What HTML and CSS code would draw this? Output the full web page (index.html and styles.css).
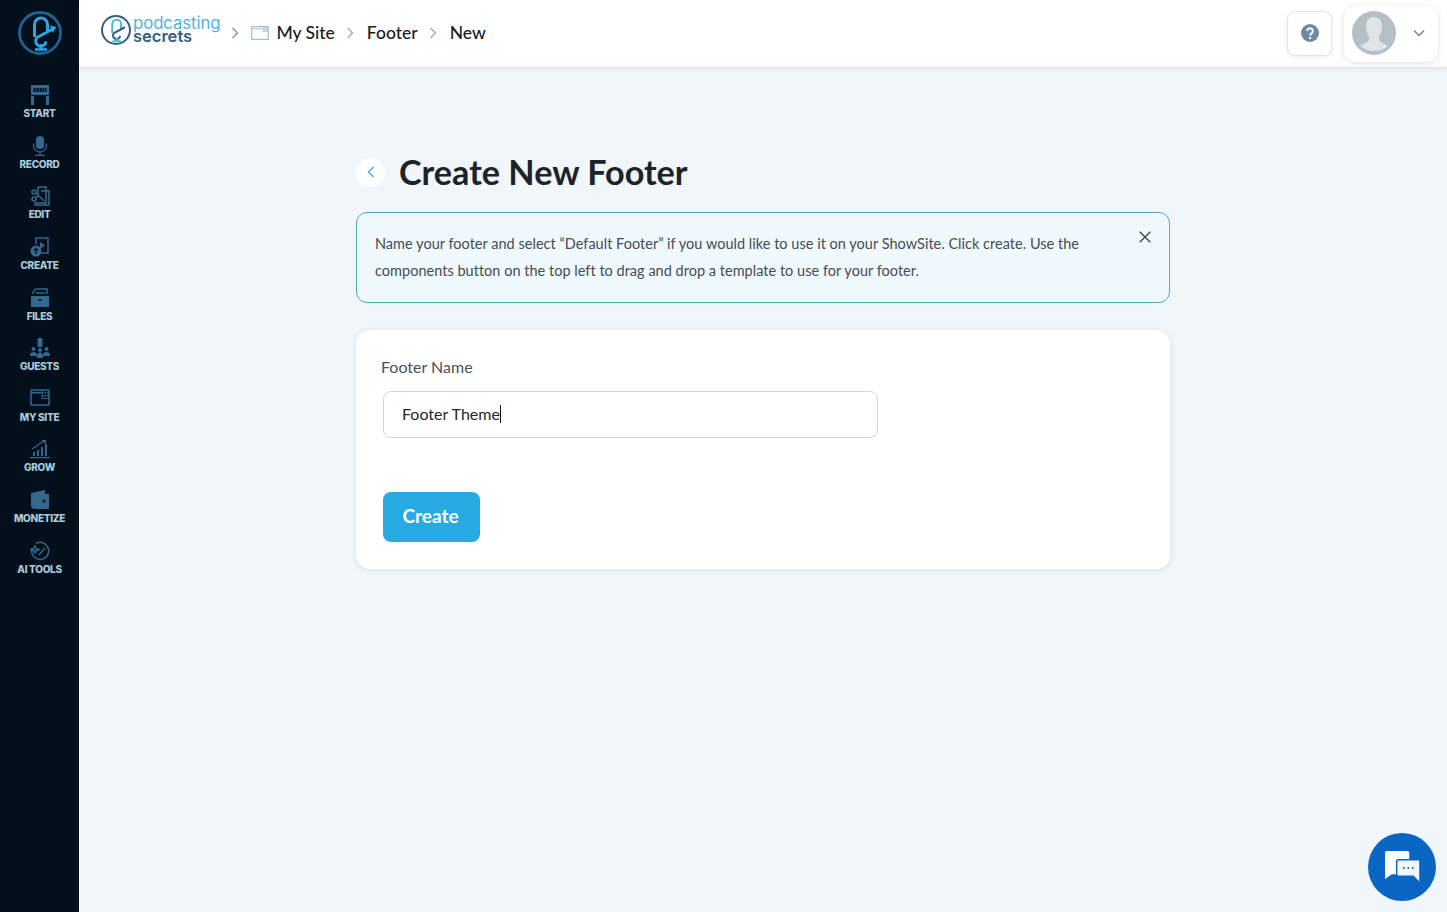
FILE: index.html
```html
<!DOCTYPE html>
<html>
  <head>
    <title>Create New Footer</title>
    <meta charset="UTF-8">
    <link rel="stylesheet" href="styles.css">
  </head>
  <body>
    <nav class="sidebar">
      <a class="side-logo" href="#">
        <svg viewBox="0 0 44 44" width="44" height="44" fill="none">
          <circle cx="22" cy="22" r="20.500" stroke="#1b6390" stroke-width="2.800"/>
          <path d="M16.500 26V13.500a6.500 6.500 0 0 1 13 0V21" stroke="#2ea3e0" stroke-width="3"/>
          <path d="M34 18.500L19 26.500a5.200 5.200 0 1 0 9 4" stroke="#2ea3e0" stroke-width="3"/>
          <path d="M32 14.500l6.500 1.500-4 6z" fill="#2ea3e0"/>
          <path d="M23 33v5M17 38.500h12" stroke="#2ea3e0" stroke-width="2.600"/>
        </svg>
      </a>
      <a class="side-item" href="#">
        <svg viewBox="0 0 20 20" width="20" height="20"><path fill="currentColor" d="M1 0h18v10H1zM1 11h3v9H1zM16 11h3v9h-3z"/><path fill="#04121f" d="M3.500 3h2.200v4H3.500zM6.500 3h2.200v4H6.500zM9.500 3h2.200v4H9.500zM12.500 3h1.500v4h-1.500zM14.800 3h1.700v4h-1.700z"/></svg>
        <span>START</span>
      </a>
      <a class="side-item" href="#">
        <svg viewBox="0 0 20 20" width="20" height="20" fill="none"><rect x="6" y="0" width="8" height="13" rx="4" fill="currentColor"/><path d="M3.500 7.500v2a6.500 6.500 0 0 0 13 0v-2M10 16v3M5 19.300h10" stroke="currentColor" stroke-width="1.300"/></svg>
        <span>RECORD</span>
      </a>
      <a class="side-item" href="#">
        <svg viewBox="0 0 20 20" width="20" height="20" fill="none" stroke="currentColor" stroke-width="1.500"><path d="M8 1h8v16H5v2h14V5h-3M8 1v8M11 5h5"/><circle cx="4" cy="6" r="2"/><circle cx="4" cy="13" r="2"/><path d="M6 7l8 8M6 12l3-3"/></svg>
        <span>EDIT</span>
      </a>
      <a class="side-item" href="#">
        <svg viewBox="0 0 20 20" width="20" height="20" fill="none"><path d="M6 7V1h12v15h-7" stroke="currentColor" stroke-width="1.500"/><path d="M10 5l5 3.500-5 3.500z" fill="currentColor"/><circle cx="6" cy="14" r="5.500" fill="currentColor"/><path d="M6 17v-5M4 13.500l2-2 2 2" stroke="#04121f" stroke-width="1.300"/></svg>
        <span>CREATE</span>
      </a>
      <a class="side-item" href="#">
        <svg viewBox="0 0 20 20" width="20" height="20"><path fill="currentColor" d="M1 8h18v11H1z"/><path fill="none" stroke="currentColor" stroke-width="1.500" d="M3 6V4l3-3h11v5M6 5h9"/><path fill="#04121f" d="M8 11h4v1.500H8z"/></svg>
        <span>FILES</span>
      </a>
      <a class="side-item" href="#">
        <svg viewBox="0 0 20 20" width="20" height="20" fill="currentColor"><rect x="7.500" y="0" width="5" height="9" rx="1.500"/><circle cx="3.500" cy="11" r="2"/><circle cx="16.500" cy="11" r="2"/><circle cx="10" cy="12" r="2"/><path d="M0 18c0-3 1-4 3.500-4S7 15 7 18zM13 18c0-3 1-4 3.500-4s3.500 1 3.500 4zM7 20c0-4 .8-5.500 3-5.500s3 1.500 3 5.500z"/></svg>
        <span>GUESTS</span>
      </a>
      <a class="side-item" href="#">
        <svg viewBox="0 0 20 20" width="20" height="20" fill="none"><path d="M1 1h18v15H1z" stroke="currentColor" stroke-width="1.500"/><path d="M12 3h1.500v1.500H12zM14.500 3H16v1.500h-1.500zM17 3h1.500v1.500H17zM12 6h1.500v1.500H12zM14.500 6H16v1.500h-1.500zM17 6h1.500v1.500H17zM1 3h10v1.500H1z" fill="currentColor"/><path d="M12 1v8.500h7" stroke="currentColor" stroke-width="1"/></svg>
        <span>MY SITE</span>
      </a>
      <a class="side-item" href="#">
        <svg viewBox="0 0 20 20" width="20" height="20" fill="currentColor"><path d="M2 10l12-8" fill="none" stroke="currentColor" stroke-width="1.200"/><path d="M11 1h5v4z"/><path d="M3 13h2v4H3zM7 11h2v6H7zM11 8h2v9h-2zM15 5h2v12h-2zM0 18h20v1.300H0z"/></svg>
        <span>GROW</span>
      </a>
      <a class="side-item" href="#">
        <svg viewBox="0 0 20 20" width="20" height="20"><path fill="currentColor" d="M1 3l14-3v4h4v15H5a4 4 0 0 1-4-4z"/><circle cx="14" cy="11" r="1.500" fill="#04121f"/></svg>
        <span>MONETIZE</span>
      </a>
      <a class="side-item" href="#">
        <svg viewBox="0 0 20 20" width="20" height="20" fill="none" stroke="currentColor" stroke-width="1.500"><path d="M6 2.500a8.500 8.500 0 1 1-4 5"/><path d="M5 5l1.200 2.500L9 8.500 6.200 9.700 5 12 3.800 9.700 1 8.500l2.800-1zM9 14l6-7"/></svg>
        <span>AI TOOLS</span>
      </a>
    </nav>

    <div class="page">
      <header class="topbar">
        <a class="brand" href="#">
          <svg viewBox="0 0 44 44" width="30" height="30" fill="none">
            <circle cx="22" cy="22" r="20.500" stroke="#34607f" stroke-width="3"/>
            <path d="M16.500 26V13.500a6.500 6.500 0 0 1 13 0V21" stroke="#4db5e0" stroke-width="3"/>
            <path d="M35 18L19 26.500a5.200 5.200 0 1 0 9 4" stroke="#34607f" stroke-width="3"/>
            <path d="M23 33v5M17 38.500h12" stroke="#4db5e0" stroke-width="3"/>
          </svg>
          <span class="brand-text">
            <span class="brand-top">podcasting</span>
            <span class="brand-bottom">secrets</span>
          </span>
        </a>
        <ol class="crumbs">
          <li class="sep"><svg viewBox="0 0 8 12" width="8" height="12" fill="none"><path d="M1.500 1l5 5-5 5" stroke="#8f979e" stroke-width="1.500"/></svg></li>
          <li class="crumb-icon"><svg viewBox="0 0 18 15" width="18" height="15" fill="none"><path d="M.7 1.700h16.600v12.600H.7z" stroke="#a9bfcc" stroke-width="1.300"/><path d="M.7 3h10v1.500H.7zM11.500 2h5.500v5h-5.500z" fill="#c3d3dd"/></svg></li>
          <li class="crumb">My Site</li>
          <li class="sep"><svg viewBox="0 0 8 12" width="8" height="12" fill="none"><path d="M1.500 1l5 5-5 5" stroke="#a2a9af" stroke-width="1.400"/></svg></li>
          <li class="crumb">Footer</li>
          <li class="sep"><svg viewBox="0 0 8 12" width="8" height="12" fill="none"><path d="M1.500 1l5 5-5 5" stroke="#a2a9af" stroke-width="1.400"/></svg></li>
          <li class="crumb">New</li>
        </ol>
        <div class="top-actions">
          <button type="button" class="help-btn">
            <svg viewBox="0 0 18 18" width="18" height="18"><circle cx="9" cy="9" r="9" fill="#6d8aa5"/><path d="M6.200 7a2.800 2.800 0 1 1 4.300 2.400c-1 .7-1.400 1-1.400 2" fill="none" stroke="#fff" stroke-width="2"/><circle cx="9.100" cy="14" r="1.200" fill="#fff"/></svg>
          </button>
          <button type="button" class="user-btn">
            <svg class="avatar" viewBox="0 0 44 44" width="44" height="44"><circle cx="22" cy="22" r="22" fill="#b4c0c6"/><path fill="#dfe4e6" d="M22 6c5 0 8 3.500 8 9 0 5-1.500 9-3 11v3c1 2 6 4 9 6a22 22 0 0 1-28 0c3-2 8-4 9-6v-3c-1.500-2-3-6-3-11 0-5.500 3-9 8-9z"/></svg>
            <svg viewBox="0 0 12 8" width="12" height="8" fill="none"><path d="M1 1.500l5 5 5-5" stroke="#7d8d9a" stroke-width="1.600"/></svg>
          </button>
        </div>
      </header>

      <main class="content">
        <div class="title-row">
          <button type="button" class="back-btn">
            <svg viewBox="0 0 8 12" width="8" height="12" fill="none"><path d="M6.500 1l-5 5 5 5" stroke="#2aa9e0" stroke-width="1.100"/></svg>
          </button>
          <h1>Create New Footer</h1>
        </div>

        <div class="notice">
          <p>Name your footer and select “Default Footer” if you would like to use it on your ShowSite. Click create. Use the components button on the top left to drag and drop a template to use for your footer.</p>
          <button type="button" class="notice-close">
            <svg viewBox="0 0 12 12" width="12" height="12" fill="none"><path d="M.7.700l10.600 10.600M11.300.700L.7 11.300" stroke="#3a4047" stroke-width="1.300"/></svg>
          </button>
        </div>

        <form class="card">
          <label for="footer-name">Footer Name</label>
          <div class="input-box">
            <span class="input-value" id="footer-name">Footer Theme</span><span class="caret"></span>
          </div>
          <button type="button" class="create-btn">Create</button>
        </form>
      </main>
    </div>

    <button type="button" class="chat-btn">
      <svg viewBox="0 0 36 33" width="35" height="32">
        <path fill="#fff" d="M2 0h21a2 2 0 0 1 2 2v20a2 2 0 0 1-2 2H7l-7 5V2a2 2 0 0 1 2-2z"/>
        <path fill="#f2f7fc" stroke="#0a66c2" stroke-width="1.500" d="M14 9h20a2 2 0 0 1 2 2v22l-7-7H14a2 2 0 0 1-2-2V11a2 2 0 0 1 2-2z"/>
        <circle cx="19.500" cy="17.500" r="1" fill="#0a66c2"/><circle cx="24" cy="17.500" r="1" fill="#0a66c2"/><circle cx="28.500" cy="17.500" r="1" fill="#0a66c2"/>
      </svg>
    </button>
  </body>
</html>
```

FILE: styles.css
```css
* {
  box-sizing: border-box;
}

body {
  margin: 0;
  height: 912px;
  overflow: hidden;
  display: flex;
  background-color: #f1f6fa;
  font-family: "Lato", "Noto Sans", sans-serif;
  color: #1d2329;
}

a {
  text-decoration: none;
}

button {
  font-family: inherit;
  cursor: pointer;
}

/* sidebar */
.sidebar {
  width: 79px;
  flex: none;
  background-color: #03101c;
  display: flex;
  flex-direction: column;
  align-items: center;
}

.side-logo {
  height: 83px;
  padding-top: 11px;
}

.side-item {
  height: 50.65px;
  width: 100%;
  display: flex;
  flex-direction: column;
  align-items: center;
  gap: 2px;
  padding-top: 2px;
  color: #33688f;
}

.side-item span {
  font-family: "Inter", sans-serif;
  font-size: 10px;
  line-height: 12px;
  font-weight: 800;
  letter-spacing: -0.3px;
  color: #a9cbdd;
  white-space: nowrap;
}

/* top bar */
.page {
  flex: 1;
  min-width: 0;
  display: flex;
  flex-direction: column;
}

.topbar {
  height: 67px;
  flex: none;
  background-color: #fff;
  box-shadow: 0 1px 5px rgba(40, 60, 80, 0.14);
  display: flex;
  align-items: center;
  padding: 0 9px 0 22px;
}

.brand {
  display: flex;
  align-items: center;
  gap: 2px;
  margin-bottom: 8px;
}

.brand-text {
  display: flex;
  flex-direction: column;
  font-family: "Inter", sans-serif;
  line-height: 13px;
}

.brand-top {
  font-size: 16.8px;
  letter-spacing: -0.1px;
  color: #4db5e0;
}

.brand-bottom {
  font-size: 16.5px;
  font-weight: 600;
  color: #34607f;
}

.crumbs {
  list-style: none;
  margin: 0 0 0 11px;
  padding: 0 0 2px;
  display: flex;
  align-items: center;
  font-size: 17.5px;
  font-weight: 500;
}

.crumb {
  color: #171c21;
}

.sep {
  display: flex;
  margin-right: 12px;
}

.crumb + .sep {
  margin: 0 13px 0 11px;
}

.crumb-icon {
  display: flex;
  margin-right: 7px;
}

.top-actions {
  margin-left: auto;
  display: flex;
  align-items: center;
  gap: 12px;
}

.help-btn {
  width: 45px;
  height: 45px;
  display: flex;
  align-items: center;
  justify-content: center;
  padding: 0 0 1px;
  background: #fff;
  border: 1px solid #e3e6e9;
  border-radius: 8px;
  box-shadow: 0 1px 4px rgba(40, 60, 80, 0.1);
}

.user-btn {
  width: 94px;
  height: 56px;
  display: flex;
  align-items: center;
  gap: 17px;
  padding: 0 0 1px 8px;
  background: #fff;
  border: 0;
  border-radius: 12px;
  box-shadow: 0 1px 6px rgba(40, 60, 80, 0.16);
}

/* content */
.content {
  width: 814px;
  margin: 0 auto;
  padding-top: 87px;
}

.title-row {
  display: flex;
  align-items: center;
  gap: 14px;
  height: 36px;
}

.back-btn {
  width: 29px;
  height: 29px;
  display: flex;
  align-items: center;
  justify-content: center;
  padding: 0;
  background: #fff;
  border: 0;
  border-radius: 50%;
}

h1 {
  margin: 0;
  font-size: 34.2px;
  font-weight: 700;
  line-height: 36px;
  color: #1d2329;
}

.notice {
  margin-top: 22px;
  height: 91px;
  display: flex;
  justify-content: space-between;
  padding: 17px 18px 0;
  background-color: #f0f9fe;
  border: 1px solid #4fa9c0;
  border-radius: 11px;
}

.notice p {
  margin: 0;
  max-width: 720px;
  font-size: 14.5px;
  line-height: 27px;
  letter-spacing: 0.02px;
  color: #454c53;
}

.notice-close {
  width: 12px;
  height: 12px;
  margin-top: 1px;
  padding: 0;
  background: none;
  border: 0;
  display: flex;
}

.card {
  margin-top: 27px;
  height: 239px;
  padding: 27px 26px;
  background-color: #fff;
  border-radius: 14px;
  box-shadow: 0 1px 6px rgba(40, 60, 80, 0.12);
}

.card label {
  display: block;
  margin-left: -1px;
  font-size: 16px;
  line-height: 20px;
  color: #4b5158;
}

.input-box {
  width: 495px;
  height: 47px;
  margin: 14px 0 54px 1px;
  padding: 0 0 2px 18px;
  display: flex;
  align-items: center;
  background: #fff;
  border: 1px solid #d3d6d9;
  border-radius: 8px;
}

.input-value {
  font-size: 16px;
  color: #25292e;
}

.caret {
  width: 1px;
  height: 18px;
  background-color: #111;
}

.create-btn {
  display: block;
  width: 97px;
  height: 50px;
  margin-left: 1px;
  padding: 0 2px 3px 0;
  background-color: #27a9e1;
  color: #fff;
  border: 0;
  border-radius: 8px;
  font-size: 19px;
  font-weight: 700;
}

/* chat bubble sits over the page */
.chat-btn {
  position: fixed;
  right: 11px;
  bottom: 11px;
  width: 68px;
  height: 68px;
  display: flex;
  align-items: center;
  justify-content: center;
  padding: 0;
  background-color: #0a66c2;
  border: 0;
  border-radius: 50%;
}
```
